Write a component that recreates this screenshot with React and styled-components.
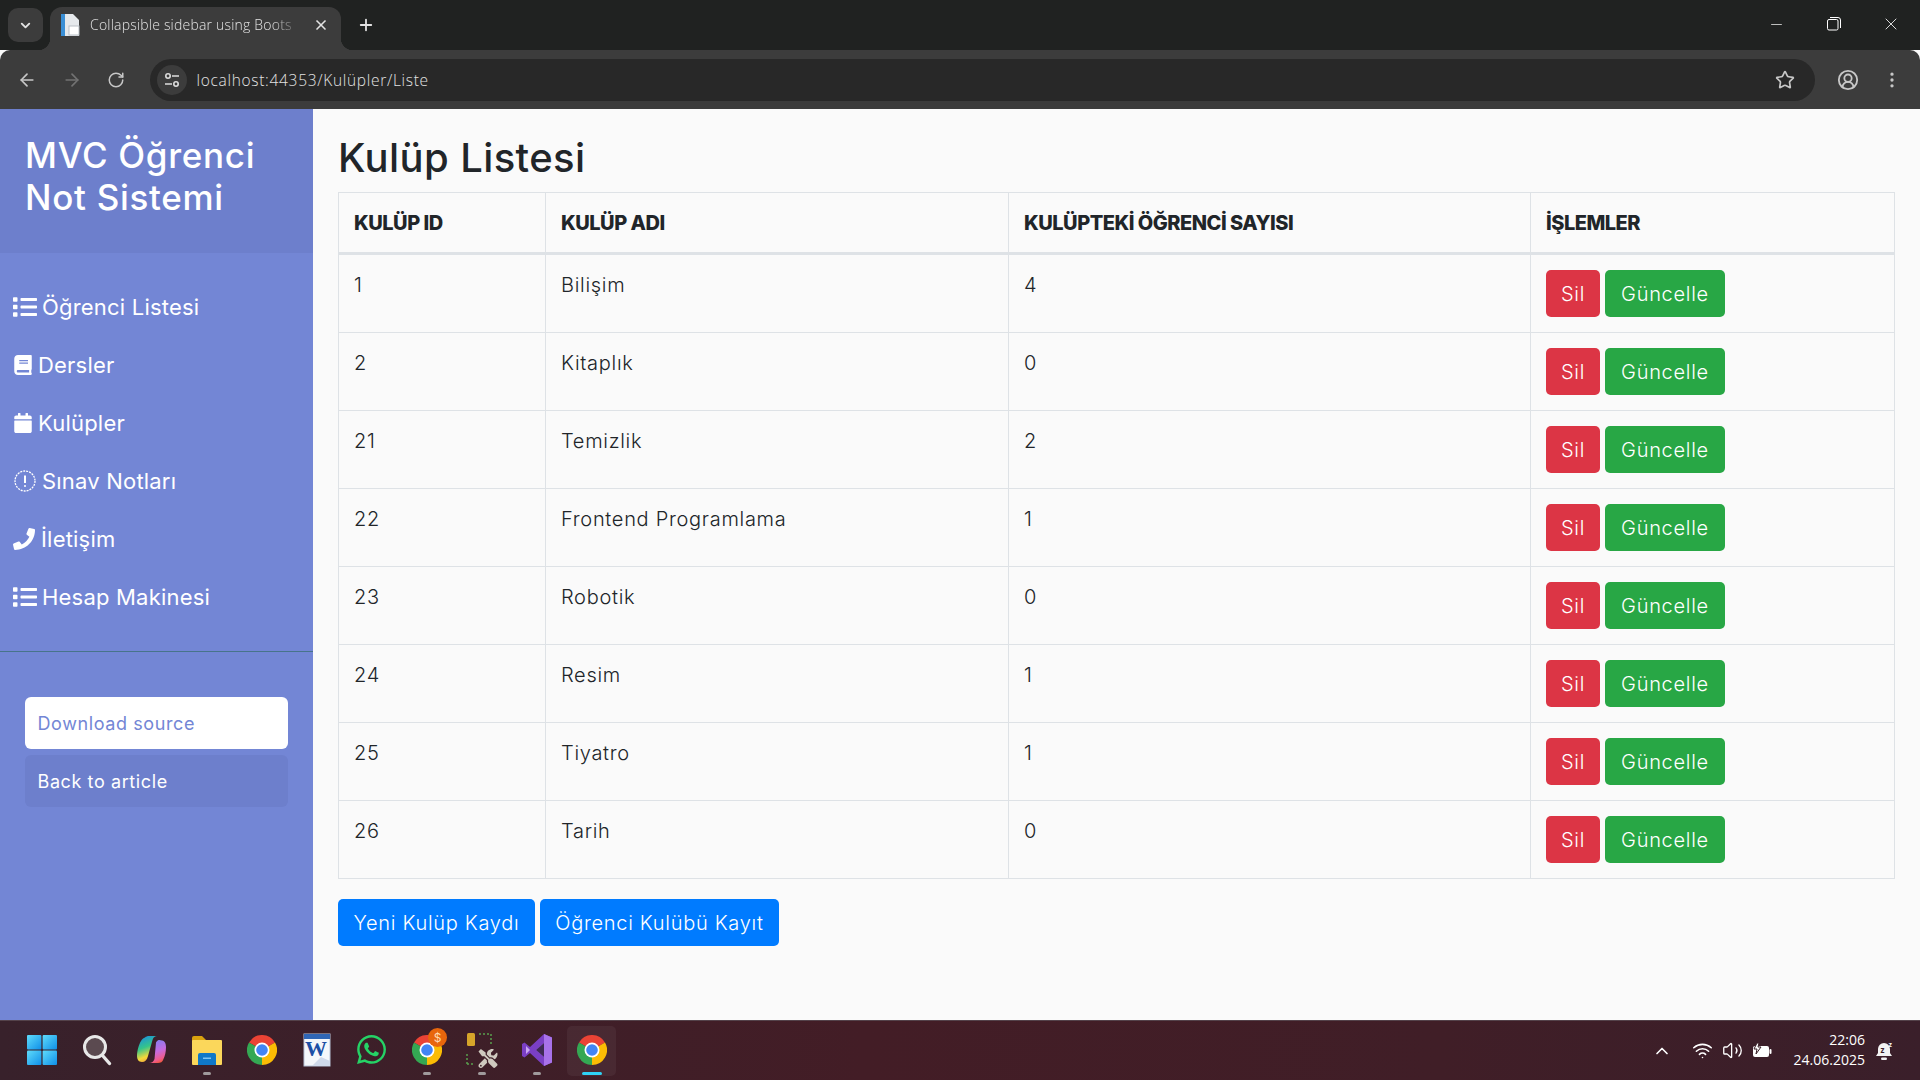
import React from 'react'
import styled, { createGlobalStyle } from 'styled-components'
import { FaList, FaBook, FaCalendar, FaPhone, FaWhatsapp, FaTools } from 'react-icons/fa'
import { ArrowLeft, ArrowRight, RotateCw, ChevronDown, ChevronUp, X, Plus, Star, CircleUserRound, EllipsisVertical, Minus, Wifi, Volume2 } from 'lucide-react'

const clubs = [
	{ id: 1, name: 'Bilişim', count: 4 },
	{ id: 2, name: 'Kitaplık', count: 0 },
	{ id: 21, name: 'Temizlik', count: 2 },
	{ id: 22, name: 'Frontend Programlama', count: 1 },
	{ id: 23, name: 'Robotik', count: 0 },
	{ id: 24, name: 'Resim', count: 1 },
	{ id: 25, name: 'Tiyatro', count: 1 },
	{ id: 26, name: 'Tarih', count: 0 },
]

const GlobalStyle = createGlobalStyle`
	html, body {
		margin: 0;
		padding: 0;
		overflow: hidden;
	}
	* {
		box-sizing: border-box;
	}
`

const ChromeLogo = ({ size = 30 }) => (
	<svg width={size} height={size} viewBox='0 0 32 32'>
		<path d='M16 16 L2.14 8 A16 16 0 0 1 29.86 8 Z' fill='#ea4335' />
		<path d='M16 16 L29.86 8 A16 16 0 0 1 16 32 Z' fill='#fbbc04' />
		<path d='M16 16 L16 32 A16 16 0 0 1 2.14 8 Z' fill='#34a853' />
		<circle cx='16' cy='16' r='8' fill='#fff' />
		<circle cx='16' cy='16' r='6.2' fill='#4285f4' />
	</svg>
)

const DashedAlert = () => (
	<svg width='24' height='24' viewBox='0 0 24 24' fill='none' stroke='#fff'>
		<circle cx='12' cy='12' r='10' strokeWidth='1.3' strokeDasharray='2 1' />
		<path d='M12 6.5v7.5' strokeWidth='2' />
		<circle cx='12' cy='17' r='1' fill='#fff' stroke='none' />
	</svg>
)

const Favicon = () => (
	<svg width='20' height='24' viewBox='0 0 20 24'>
		<path d='M1 1h12l6 6v16H1z' fill='#e6e9ec' />
		<rect x='1' y='1' width='4' height='22' fill='#3a8fd6' />
		<rect x='9' y='13' width='10' height='9' fill='#fff' stroke='#b9c0c6' />
	</svg>
)

const SiteInfo = () => (
	<svg width='16' height='16' viewBox='0 0 16 16' fill='none' stroke='#ddd' strokeWidth='1.6'>
		<circle cx='4' cy='4' r='2.2' />
		<path d='M8 4h7M1 12h7' />
		<circle cx='12' cy='12' r='2.2' />
	</svg>
)

const RestoreIcon = () => (
	<svg width='14' height='14' viewBox='0 0 14 14' fill='none' stroke='#fff' strokeWidth='1'>
		<rect x='0.5' y='2.5' width='10.5' height='10.5' rx='1.5' />
		<path d='M3 .5h8a2.5 2.5 0 0 1 2.5 2.5v8' />
	</svg>
)

const WindowsLogo = () => (
	<svg width='30' height='30' viewBox='0 0 30 30'>
		<defs>
			<linearGradient id='win' x1='0' y1='0' x2='1' y2='1'>
				<stop offset='0' stopColor='#5fdcfb' />
				<stop offset='1' stopColor='#0f8fe8' />
			</linearGradient>
		</defs>
		<rect x='0' y='0' width='14.4' height='14.4' rx='1' fill='url(#win)' />
		<rect x='15.6' y='0' width='14.4' height='14.4' rx='1' fill='url(#win)' />
		<rect x='0' y='15.6' width='14.4' height='14.4' rx='1' fill='url(#win)' />
		<rect x='15.6' y='15.6' width='14.4' height='14.4' rx='1' fill='url(#win)' />
	</svg>
)

const SearchLogo = () => (
	<svg width='30' height='32' viewBox='0 0 30 32' fill='none'>
		<circle cx='13' cy='13' r='10.5' fill='#5b4a50' stroke='#e8e8e8' strokeWidth='3' />
		<path d='M20.5 21.5 L27.5 29.5' stroke='#e8e8e8' strokeWidth='3.4' strokeLinecap='round' />
	</svg>
)

const CopilotLogo = () => (
	<svg width='29' height='27' viewBox='0 0 29 27'>
		<defs>
			<linearGradient id='copA' x1='0.2' y1='0' x2='0.5' y2='1'>
				<stop offset='0' stopColor='#1a8fe0' />
				<stop offset='0.45' stopColor='#35c58a' />
				<stop offset='0.8' stopColor='#f4d93a' />
				<stop offset='1' stopColor='#f2a33c' />
			</linearGradient>
			<linearGradient id='copB' x1='0.3' y1='0' x2='0.6' y2='1'>
				<stop offset='0' stopColor='#7f7ff0' />
				<stop offset='0.5' stopColor='#c56be0' />
				<stop offset='0.85' stopColor='#ee5c8c' />
				<stop offset='1' stopColor='#f2563c' />
			</linearGradient>
		</defs>
		<path d='M19 6.500C21 3 23 4 25 4.500c3 .5 4 3.500 4 6.500 0 5-1 9-2.500 12-1 3-3 4-5.500 4h-9c3 0 4.500-1.500 5.500-4z' fill='url(#copB)' />
		<path d='M8 1.500C9 .5 10.500 0 12 0h8c-2 0-3.500 1-4.500 4L11 20c-1 4-3 6-6 6-3.500 0-5-3-5-6 0-5 2-12 4-15 1-2 2.500-3 4-3.500z' fill='url(#copA)' />
	</svg>
)

const FolderLogo = () => (
	<svg width='32' height='32' viewBox='0 0 32 32'>
		<path d='M1 4a2 2 0 0 1 2-2h8l4 4h15v6H1z' fill='#d9a20f' />
		<rect x='1' y='6' width='30' height='25' rx='1' fill='#fbd75b' />
		<path d='M7 21a2 2 0 0 1 2-2h14a2 2 0 0 1 2 2v10H7z' fill='#0f78c8' />
		<rect x='12' y='23.5' width='8' height='1.5' fill='#7cc4f4' />
	</svg>
)

const WordLogo = () => (
	<svg width='28' height='34' viewBox='0 0 28 34'>
		<rect x='1' y='1' width='26' height='32' fill='#f4f7fb' stroke='#b8c4d8' />
		<rect x='1' y='1' width='26' height='5' fill='#2f66b5' />
		<text x='2' y='23' fontFamily='Liberation Serif, serif' fontWeight='700' fontSize='22' fill='#1c4fa5'>W</text>
		<path d='M9 33l9-9 9 4v5z' fill='#cfd9ea' />
	</svg>
)

const BuildToolsLogo = () => (
	<ToolsBox>
		<svg width='32' height='36' viewBox='0 0 32 36' fill='none'>
			<rect x='1' y='1' width='8' height='13' rx='1.5' fill='#d6a52a' />
			<path d='M13 2h12M25 2v10M1 22v10M1 32h8' stroke='#5aa04e' strokeWidth='1.5' strokeDasharray='2 2' />
		</svg>
		<ToolsGlyph />
	</ToolsBox>
)

const VsLogo = () => (
	<svg width='30' height='34' viewBox='0 0 30 34'>
		<path d='M22 1l8 3.5v25L22 33 8 20l-5.500 4.500L0 23V11l2.500-1.500L8 14z' fill='#7a3fc4' />
		<path d='M22 1l8 3.500v25L22 33zM22 10l-8 7 8 7z' fill='#a872ea' />
		<path d='M4 13v8l4-4z' fill='#c9a6f2' />
		<path d='M22 10v14l-8-7z' fill='#3e2a55' />
	</svg>
)

const BatteryIcon = () => (
	<svg width='20' height='16' viewBox='0 0 20 16'>
		<rect x='1' y='3' width='16' height='11' rx='2' fill='#fff' />
		<rect x='17.500' y='6' width='2' height='5' rx='1' fill='#fff' />
		<path d='M5 0L2 6h3l-1 5 5-7H6l1-4z' fill='#fff' stroke='#3a2028' strokeWidth='1' />
	</svg>
)

const BellIcon = () => (
	<svg width='18' height='20' viewBox='0 0 18 20'>
		<path d='M8 2a6 6 0 0 1 6 6v4l2 3H0l2-3V8a6 6 0 0 1 6-6z' fill='#f3f3f3' />
		<rect x='5' y='16.500' width='6' height='2.500' rx='1.200' fill='#f3f3f3' />
		<text x='4.500' y='12' fontFamily='Open Sans, sans-serif' fontSize='8' fontWeight='700' fill='#3a2028'>z</text>
		<text x='12.500' y='6' fontFamily='Open Sans, sans-serif' fontSize='7' fontWeight='700' fill='#f3f3f3'>z</text>
	</svg>
)

export default function App() {
	return (
		<Screen>
			<GlobalStyle />
			<TabStrip>
				<TabSearch>
					<ChevronDown size={15} strokeWidth={3} />
				</TabSearch>
				<Tab>
					<Favicon />
					<TabTitle>Collapsible sidebar using Boots</TabTitle>
					<X size={16} strokeWidth={2.5} color='#e3e3e3' />
				</Tab>
				<NewTab>
					<Plus size={18} strokeWidth={2.4} color='#e3e3e3' />
				</NewTab>
				<WindowButtons>
					<WindowButton>
						<Minus size={17} strokeWidth={1} color='#fff' />
					</WindowButton>
					<WindowButton>
						<RestoreIcon />
					</WindowButton>
					<WindowButton>
						<X size={20} strokeWidth={1} color='#fff' />
					</WindowButton>
				</WindowButtons>
			</TabStrip>
			<Toolbar>
				<NavButton>
					<ArrowLeft size={20} color='#c7c7c7' />
				</NavButton>
				<NavButton>
					<ArrowRight size={20} color='#727272' />
				</NavButton>
				<NavButton>
					<RotateCw size={18} color='#c7c7c7' />
				</NavButton>
				<AddressBar>
					<SiteBadge>
						<SiteInfo />
					</SiteBadge>
					<Url>localhost:44353/Kulüpler/Liste</Url>
					<Star size={20} color='#c7c7c7' />
				</AddressBar>
				<ToolbarEnd>
					<CircleUserRound size={22} color='#c7c7c7' />
					<EllipsisVertical size={20} color='#c7c7c7' />
				</ToolbarEnd>
			</Toolbar>

			<Page>
				<Sidebar>
					<SidebarHeader>
						<Brand>MVC Öğrenci Not Sistemi</Brand>
					</SidebarHeader>
					<Menu>
						<MenuItem>
							<FaList size={24} />
							<MenuLabel $gap={5}>Öğrenci Listesi</MenuLabel>
						</MenuItem>
						<MenuItem>
							<FaBook size={20} />
							<MenuLabel $gap={5}>Dersler</MenuLabel>
						</MenuItem>
						<MenuItem>
							<FaCalendar size={20} />
							<MenuLabel $gap={5}>Kulüpler</MenuLabel>
						</MenuItem>
						<MenuItem>
							<DashedAlert />
							<MenuLabel $gap={5}>Sınav Notları</MenuLabel>
						</MenuItem>
						<MenuItem>
							<FaPhone size={22} />
							<MenuLabel $gap={6}>İletişim</MenuLabel>
						</MenuItem>
						<MenuItem>
							<FaList size={24} />
							<MenuLabel $gap={5}>Hesap Makinesi</MenuLabel>
						</MenuItem>
					</Menu>
					<SideLinks>
						<SideLink $primary>Download source</SideLink>
						<SideLink>Back to article</SideLink>
					</SideLinks>
				</Sidebar>

				<Content>
					<Title>Kulüp Listesi</Title>
					<Table>
						<colgroup>
							<col style={{ width: 207 }} />
							<col style={{ width: 463 }} />
							<col style={{ width: 522 }} />
							<col />
						</colgroup>
						<thead>
							<tr>
								<Th>KULÜP ID</Th>
								<Th>KULÜP ADI</Th>
								<Th>KULÜPTEKİ ÖĞRENCİ SAYISI</Th>
								<Th>İŞLEMLER</Th>
							</tr>
						</thead>
						<tbody>
							{clubs.map(club => (
								<tr key={club.id}>
									<Td>{club.id}</Td>
									<Td>{club.name}</Td>
									<Td>{club.count}</Td>
									<Td>
										<Actions>
											<Button $bg='#dc3545' $pad={15}>Sil</Button>
											<Button $bg='#28a745'>Güncelle</Button>
										</Actions>
									</Td>
								</tr>
							))}
						</tbody>
					</Table>
					<Footer>
						<Button $bg='#007bff' $pad={15.5}>Yeni Kulüp Kaydı</Button>
						<Button $bg='#007bff' $pad={15.5}>Öğrenci Kulübü Kayıt</Button>
					</Footer>
				</Content>
			</Page>

			<Taskbar>
				<TaskIcons>
					<TaskSlot><WindowsLogo /></TaskSlot>
					<TaskSlot><SearchLogo /></TaskSlot>
					<TaskSlot><CopilotLogo /></TaskSlot>
					<TaskSlot $open><FolderLogo /></TaskSlot>
					<TaskSlot><ChromeLogo /></TaskSlot>
					<TaskSlot><WordLogo /></TaskSlot>
					<TaskSlot><FaWhatsapp size={33} color='#25d366' /></TaskSlot>
					<TaskSlot $open>
						<ChromeLogo />
						<Badge>$</Badge>
					</TaskSlot>
					<TaskSlot $open><BuildToolsLogo /></TaskSlot>
					<TaskSlot $open><VsLogo /></TaskSlot>
					<TaskSlot $active><ChromeLogo /></TaskSlot>
				</TaskIcons>
				<Tray>
					<ChevronUp size={20} strokeWidth={2} color='#fff' />
					<TrayIcons>
						<Wifi size={21} color='#fff' strokeWidth={1.8} />
						<Volume2 size={21} color='#fff' strokeWidth={1.5} />
						<BatteryIcon />
					</TrayIcons>
					<Clock>
						<span>22:06</span>
						<span>24.06.2025</span>
					</Clock>
					<BellIcon />
				</Tray>
			</Taskbar>
		</Screen>
	)
}

const Screen = styled.div`
	width: 1920px;
	height: 1080px;
	display: flex;
	flex-direction: column;
	overflow: hidden;
	background: #fafafa;
	font-family: Inter, 'Open Sans', sans-serif;
	color: #212529;
`

const TabStrip = styled.div`
	height: 50px;
	flex: none;
	display: flex;
	align-items: flex-end;
	background: #202221;
	padding-left: 8px;
`

const TabSearch = styled.div`
	width: 35px;
	height: 34px;
	margin-bottom: 8px;
	border-radius: 10px;
	background: #3c3c3c;
	color: #e3e3e3;
	display: flex;
	align-items: center;
	justify-content: center;
`

const Tab = styled.div`
	position: relative;
	width: 291px;
	height: 43px;
	margin-left: 7px;
	padding: 0 12px 8px 10px;
	border-radius: 12px 12px 0 0;
	background: #3c3c3c;
	display: flex;
	align-items: center;
	gap: 10px;
	&::before,
	&::after {
		content: '';
		position: absolute;
		bottom: 0;
		width: 12px;
		height: 12px;
	}
	&::before {
		left: -12px;
		background: radial-gradient(circle at 0 0, transparent 12px, #3c3c3c 12.500px);
	}
	&::after {
		right: -12px;
		background: radial-gradient(circle at 100% 0, transparent 12px, #3c3c3c 12.500px);
	}
`

const TabTitle = styled.span`
	flex: 1;
	overflow: hidden;
	white-space: nowrap;
	font-family: 'Open Sans', sans-serif;
	font-size: 14px;
	font-weight: 300;
	letter-spacing: 0.2px;
	color: #e3e3e3;
	mask-image: linear-gradient(90deg, #000 85%, transparent);
`

const NewTab = styled.div`
	width: 24px;
	height: 24px;
	margin: 0 0 13px 13px;
	display: flex;
	align-items: center;
	justify-content: center;
`

const WindowButtons = styled.div`
	margin-left: auto;
	align-self: flex-start;
	display: flex;
	height: 48px;
	padding-right: 1px;
`

const WindowButton = styled.div`
	width: 57px;
	display: flex;
	align-items: center;
	justify-content: center;
`

const Toolbar = styled.div`
	height: 59px;
	flex: none;
	display: flex;
	align-items: center;
	background: #3c3c3c;
	border-radius: 10px 10px 0 0;
	padding: 1px 0 0 5px;
`

const NavButton = styled.div`
	width: 44.500px;
	height: 36px;
	display: flex;
	align-items: center;
	justify-content: center;
`

const AddressBar = styled.div`
	width: 1665px;
	height: 42px;
	margin-left: 11px;
	padding: 0 20px 0 7px;
	border-radius: 21px;
	background: #282828;
	display: flex;
	align-items: center;
`

const SiteBadge = styled.div`
	width: 30px;
	height: 30px;
	border-radius: 50%;
	background: #3c3c3c;
	display: flex;
	align-items: center;
	justify-content: center;
`

const Url = styled.span`
	flex: 1;
	margin-left: 10px;
	font-family: 'Open Sans', sans-serif;
	font-size: 15.500px;
	font-weight: 300;
	letter-spacing: 0.7px;
	color: #e3e3e3;
`

const ToolbarEnd = styled.div`
	flex: 1;
	display: flex;
	align-items: center;
	justify-content: space-between;
	padding: 0 18px 0 22px;
`

const Page = styled.div`
	flex: 1;
	min-height: 0;
	display: flex;
`

const Sidebar = styled.nav`
	width: 313px;
	flex: none;
	background: #7386d5;
	color: #fff;
`

const SidebarHeader = styled.div`
	height: 144px;
	padding: 25px;
	background: #6d7fcc;
`

const Brand = styled.h3`
	margin: 0;
	font-size: 35px;
	line-height: 42px;
	font-weight: 500;
	letter-spacing: 0.7px;
`

const Menu = styled.ul`
	list-style: none;
	margin: 0;
	padding: 25px 0;
	border-bottom: 1px solid #47748b;
`

const MenuItem = styled.li`
	height: 58px;
	padding-left: 13px;
	display: flex;
	align-items: center;
	font-size: 22px;
	letter-spacing: 0.2px;
`

const MenuLabel = styled.span`
	margin-left: ${({ $gap }) => $gap}px;
`

const SideLinks = styled.div`
	padding: 45px 25px 0;
	display: flex;
	flex-direction: column;
	gap: 6px;
`

const SideLink = styled.a`
	height: 52px;
	padding-left: 12.500px;
	border-radius: 6px;
	display: flex;
	align-items: center;
	font-size: 18px;
	letter-spacing: 0.6px;
	background: ${({ $primary }) => ($primary ? '#fff' : '#6d7fcc')};
	color: ${({ $primary }) => ($primary ? '#7386d5' : '#fff')};
`

const Content = styled.main`
	flex: 1;
	min-width: 0;
	padding: 25px 25px 0;
`

const Title = styled.h2`
	margin: 0 0 10px;
	font-size: 40px;
	line-height: 48px;
	font-weight: 500;
	letter-spacing: 0.4px;
`

const Table = styled.table`
	width: 1557px;
	table-layout: fixed;
	border-collapse: collapse;
`

const Th = styled.th`
	height: 61px;
	padding: 15px 15px 14px;
	text-align: left;
	vertical-align: middle;
	font-size: 20px;
	font-weight: 800;
	letter-spacing: -0.5px;
	line-height: 30px;
	border: 1px solid #dee2e6;
	border-bottom-width: 3px;
`

const Td = styled.td`
	height: 78px;
	padding: 15px;
	vertical-align: top;
	font-size: 20px;
	font-weight: 300;
	letter-spacing: 0.7px;
	line-height: 30px;
	border: 1px solid #dee2e6;
`

const Actions = styled.div`
	display: flex;
	gap: 5px;
`

const Button = styled.button`
	height: 47px;
	padding: 0 ${({ $pad = 16 }) => $pad}px;
	border: none;
	border-radius: 5px;
	font: inherit;
	font-size: 20px;
	font-weight: 300;
	letter-spacing: 0.7px;
	color: #fff;
	background: ${({ $bg }) => $bg};
`

const Footer = styled.div`
	margin-top: 20px;
	display: flex;
	gap: 5px;
`

const Taskbar = styled.footer`
	height: 60px;
	flex: none;
	display: flex;
	align-items: center;
	justify-content: space-between;
	padding-left: 14px;
	border-top: 1px solid #54424a;
	background: linear-gradient(90deg, #38212b, #431d26 45%, #401e27 75%, #3a1f2a);
`

const TaskIcons = styled.div`
	display: flex;
	height: 100%;
	align-items: center;
`

const TaskSlot = styled.div`
	position: relative;
	width: ${({ $active }) => ($active ? 49 : 55)}px;
	height: 50px;
	margin: 0 ${({ $active }) => ($active ? 3 : 0)}px;
	padding-bottom: 2px;
	display: flex;
	align-items: center;
	justify-content: center;
	border-radius: 5px;
	background: ${({ $active }) => ($active ? 'rgba(255,255,255,0.05)' : 'none')};
	&::after {
		content: '';
		display: ${({ $open, $active }) => ($open || $active ? 'block' : 'none')};
		position: absolute;
		bottom: 1px;
		left: 50%;
		transform: translateX(-50%);
		width: ${({ $active }) => ($active ? 20 : 8)}px;
		height: 3px;
		border-radius: 2px;
		background: ${({ $active }) => ($active ? '#2fd2f5' : '#a09a9c')};
	}
`

const Badge = styled.span`
	position: absolute;
	top: 2px;
	right: 7px;
	width: 19px;
	height: 19px;
	border-radius: 50%;
	background: #e8660c;
	color: #ffd9b0;
	font-size: 12px;
	display: flex;
	align-items: center;
	justify-content: center;
`

const ToolsBox = styled.div`
	position: relative;
	width: 32px;
	height: 36px;
`

const ToolsGlyph = styled(FaTools)`
	position: absolute;
	right: 0;
	bottom: 0;
	width: 20px;
	height: 19px;
	color: #cfc9bf;
`

const Tray = styled.div`
	display: flex;
	align-items: center;
	padding-right: 26px;
`

const TrayIcons = styled.div`
	display: flex;
	align-items: center;
	gap: 9px;
	margin: 0 22px 0 20px;
`

const Clock = styled.div`
	display: flex;
	flex-direction: column;
	align-items: flex-end;
	margin: -2px 11px 0 0;
	font-family: 'Open Sans', sans-serif;
	font-size: 14px;
	line-height: 20px;
	color: #fff;
`
